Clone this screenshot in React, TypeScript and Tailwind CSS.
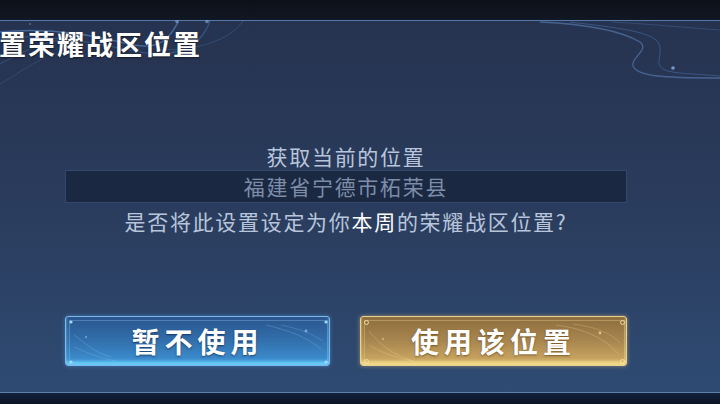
import React from "react";

const cjk = { fontFamily: '"Noto Sans CJK SC", "Noto Sans", sans-serif' };

function BlueButton({ label }: { label: string }) {
  return (
    <button className="relative flex h-[50px] w-[265px] items-center justify-center rounded-[3px] border-[1.5px] border-[#7cb8ec] bg-gradient-to-b from-[#2b568d] via-[#3270ad] to-[#3f95d6] shadow-[0_0_4px_rgba(90,170,240,0.5),inset_0_-4px_3px_rgba(110,220,255,0.75)]">
      <svg className="pointer-events-none absolute inset-0" width="265" height="50" viewBox="0 0 265 50">
        <rect x="3.5" y="3.5" width="258" height="43" fill="none" stroke="#8cc4f0" strokeOpacity="0.45" strokeWidth="0.8" />
        <circle cx="5" cy="5" r="1.6" fill="#a8d6ff" />
        <circle cx="260" cy="5" r="1.6" fill="#a8d6ff" />
        <circle cx="5" cy="45" r="1.6" fill="#a8d6ff" />
        <circle cx="260" cy="45" r="1.6" fill="#a8d6ff" />
        <path d="M8 18 C 20 26, 25 34, 45 40" fill="none" stroke="#8fc6f2" strokeOpacity="0.35" strokeWidth="0.8" />
        <path d="M8 30 C 22 36, 30 40, 50 44" fill="none" stroke="#8fc6f2" strokeOpacity="0.3" strokeWidth="0.8" />
        <circle cx="20" cy="20" r="1.2" fill="#8fc6f2" fillOpacity="0.5" />
        <path d="M200 8 C 225 14, 240 20, 255 32" fill="none" stroke="#8fc6f2" strokeOpacity="0.35" strokeWidth="0.8" />
        <path d="M215 8 C 235 12, 248 18, 257 24" fill="none" stroke="#8fc6f2" strokeOpacity="0.3" strokeWidth="0.8" />
        <circle cx="240" cy="14" r="1.4" fill="#a8d6ff" fillOpacity="0.6" />
      </svg>
      <span className="relative text-[28px] font-bold leading-none tracking-[5px] text-white [text-shadow:0_1px_2px_rgba(0,20,60,0.6)]" style={cjk}>
        {label}
      </span>
    </button>
  );
}

function GoldButton({ label }: { label: string }) {
  return (
    <button className="relative flex h-[50px] w-[267px] items-center justify-center rounded-[3px] border-[1.5px] border-[#ecd38c] bg-gradient-to-b from-[#8e6e3f] via-[#a8864f] to-[#d2ae66] shadow-[0_0_4px_rgba(240,210,130,0.5),inset_0_-4px_3px_rgba(250,230,150,0.75)]">
      <svg className="pointer-events-none absolute inset-0" width="267" height="50" viewBox="0 0 267 50">
        <rect x="3.5" y="3.5" width="260" height="43" fill="none" stroke="#f0d890" strokeOpacity="0.45" strokeWidth="0.8" />
        <circle cx="5.5" cy="5.5" r="2" fill="none" stroke="#f6e2a0" strokeWidth="0.9" />
        <circle cx="261.5" cy="5.5" r="2" fill="none" stroke="#f6e2a0" strokeWidth="0.9" />
        <circle cx="5.5" cy="44.5" r="2" fill="none" stroke="#f6e2a0" strokeWidth="0.9" />
        <circle cx="261.5" cy="44.5" r="2" fill="none" stroke="#f6e2a0" strokeWidth="0.9" />
        <path d="M8 14 C 18 26, 28 36, 52 44" fill="none" stroke="#f3dc9a" strokeOpacity="0.35" strokeWidth="0.8" />
        <path d="M8 28 C 22 36, 32 40, 56 45" fill="none" stroke="#f3dc9a" strokeOpacity="0.3" strokeWidth="0.8" />
        <circle cx="22" cy="22" r="1.2" fill="#f3dc9a" fillOpacity="0.5" />
        <path d="M195 8 C 225 12, 245 22, 258 38" fill="none" stroke="#f3dc9a" strokeOpacity="0.35" strokeWidth="0.8" />
        <path d="M212 7 C 235 10, 250 16, 259 26" fill="none" stroke="#f3dc9a" strokeOpacity="0.3" strokeWidth="0.8" />
        <circle cx="239" cy="16" r="1.4" fill="#f6e2a0" fillOpacity="0.7" />
      </svg>
      <span className="relative text-[28px] font-bold leading-none tracking-[5px] text-white [text-shadow:0_1px_2px_rgba(80,50,10,0.6)]" style={cjk}>
        {label}
      </span>
    </button>
  );
}

export default function App() {
  return (
    <div className="flex h-[404px] w-[720px] flex-col overflow-hidden bg-[#0d121b]" style={cjk}>
      <div className="h-[20px] shrink-0 bg-gradient-to-b from-[#0c1018] to-[#111724]" />

      {/* Panel */}
      <div className="relative h-[373px] shrink-0 border-t border-b border-t-[#557aa8] border-b-[#5d7fab] bg-gradient-to-b from-[#263350] via-[#2a3c5d] to-[#2f4b73]">
        {/* decorative swirls */}
        <svg className="pointer-events-none absolute left-0 top-[-1px]" width="720" height="90" viewBox="0 0 720 90">
          <path d="M0 12 C 40 8, 80 12, 120 22 C 150 30, 165 28, 178 2" fill="none" stroke="#5580b8" strokeOpacity="0.7" strokeWidth="1.6" />
          <path d="M0 18 C 50 14, 90 22, 140 32 C 170 38, 200 30, 210 1" fill="none" stroke="#3f6aa3" strokeOpacity="0.6" strokeWidth="1.2" />
          <path d="M0 44 C 20 34, 35 24, 60 20" fill="none" stroke="#4e78b0" strokeOpacity="0.4" strokeWidth="1" />
          <path d="M0 64 C 15 56, 30 44, 45 38" fill="none" stroke="#4e78b0" strokeOpacity="0.3" strokeWidth="1" />
          <path d="M160 30 C 200 30, 230 20, 243 1" fill="none" stroke="#3f6aa3" strokeOpacity="0.45" strokeWidth="1" />
          <circle cx="177" cy="1.5" r="1.8" fill="#7c9fd0" fillOpacity="0.7" />
          <circle cx="207" cy="1.5" r="1.8" fill="#7c9fd0" fillOpacity="0.7" />
          <circle cx="30" cy="4" r="1" fill="#7c9fd0" fillOpacity="0.5" />
          <path d="M540 2 C 580 4, 620 10, 640 22 C 650 30, 630 38, 633 46 C 637 56, 660 58, 720 58" fill="none" stroke="#5b84bb" strokeOpacity="0.6" strokeWidth="1.3" />
          <path d="M570 2 C 600 6, 650 10, 658 22 C 665 34, 652 44, 665 50 C 675 54, 700 54, 720 56" fill="none" stroke="#4e78b0" strokeOpacity="0.5" strokeWidth="1" />
          <path d="M612 2 C 650 4, 690 8, 720 10" fill="none" stroke="#4e78b0" strokeOpacity="0.35" strokeWidth="1" />
          <circle cx="673" cy="48" r="1.8" fill="#8fb2e0" fillOpacity="0.8" />
        </svg>

        <h1 className="relative ml-[-1px] mt-[8px] text-[27px] font-bold leading-[30px] tracking-[2px] text-white [text-shadow:0_1px_2px_rgba(0,0,0,0.5)]">
          置荣耀战区位置
        </h1>

        <div className="relative ml-[65px] mt-[85px] flex w-[562px] flex-col items-center">
          <p className="text-[21px] leading-[24px] tracking-[1.7px] text-[#b8c6dc]">获取当前的位置</p>
          <div className="mt-[2px] flex h-[33px] w-full items-center justify-center border border-[#33496b] bg-[#1a2842]">
            <span className="text-[21px] tracking-[1.7px] text-[#7d8da8]">福建省宁德市柘荣县</span>
          </div>
          <p className="mt-[6px] text-[21px] leading-[24px] tracking-[1.7px] text-[#b8c6dc]">
            是否将此设置设定为你<span className="text-white">本周</span>的荣耀战区位置?
          </p>
          <div className="mt-[83px] flex w-full justify-between">
            <BlueButton label="暂不使用" />
            <GoldButton label="使用该位置" />
          </div>
        </div>
      </div>

      <div className="flex-1 bg-gradient-to-b from-[#12203a] to-[#0c1526]" />
    </div>
  );
}
